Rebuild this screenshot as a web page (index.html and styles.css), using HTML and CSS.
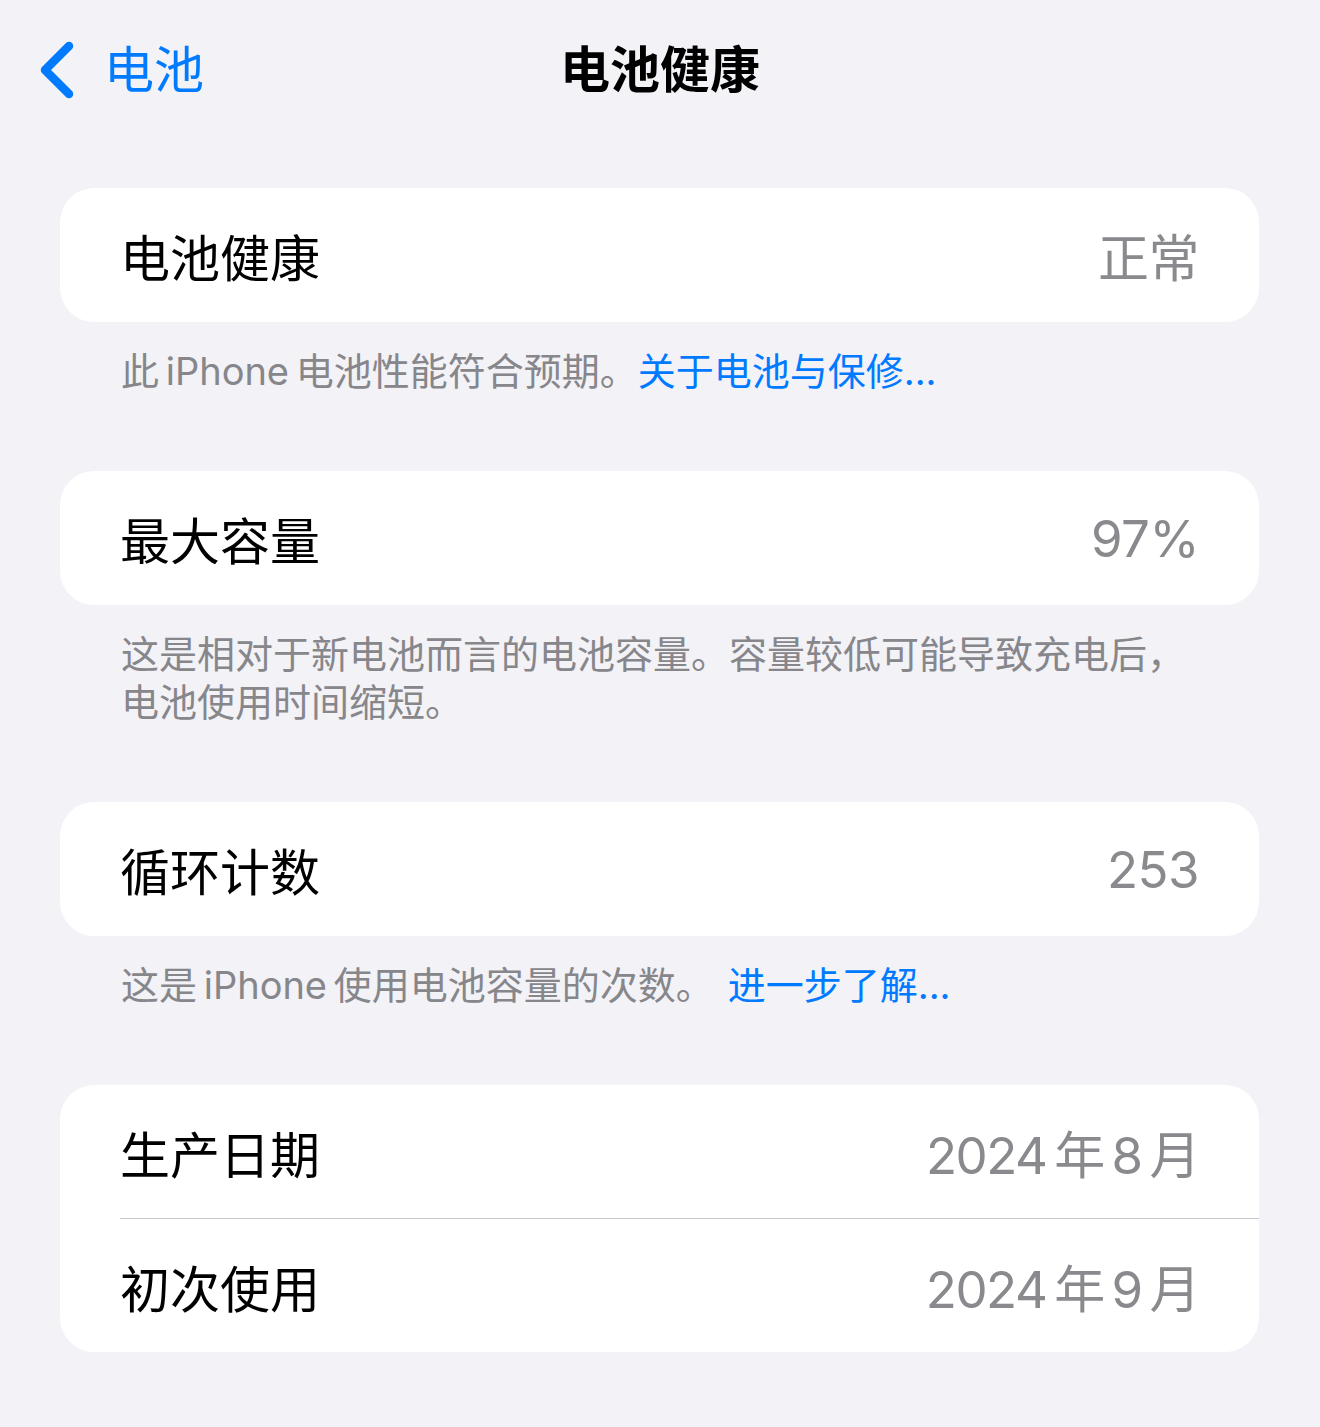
FILE: index.html
```html
<!DOCTYPE html>
<html lang="zh-CN">
<head>
    <meta charset="UTF-8">
    <meta name="viewport" content="width=device-width, initial-scale=1.0">
    <title>电池健康</title>
    <link rel="stylesheet" href="styles.css">
</head>
<body>
    <header class="nav">
        <a class="back" href="#">
            <svg class="chevron" width="40" height="62" viewBox="0 0 40 62">
                <path d="M30 7 L6 31 L30 55" fill="none" stroke="currentColor" stroke-width="8.5" stroke-linecap="round" stroke-linejoin="round"/>
            </svg>
            <span>电池</span>
        </a>
        <h1 class="title">电池健康</h1>
    </header>

    <main class="content">
        <section class="group">
            <div class="row">
                <span class="label">电池健康</span>
                <span class="value">正常</span>
            </div>
        </section>
        <p class="footer">此 iPhone 电池性能符合预期。<a href="#">关于电池与保修...</a></p>

        <section class="group">
            <div class="row">
                <span class="label">最大容量</span>
                <span class="value">97%</span>
            </div>
        </section>
        <p class="footer">这是相对于新电池而言的电池容量。容量较低可能导致充电后，电池使用时间缩短。</p>

        <section class="group">
            <div class="row">
                <span class="label">循环计数</span>
                <span class="value">253</span>
            </div>
        </section>
        <p class="footer">这是 iPhone 使用电池容量的次数。<a class="more" href="#">进一步了解...</a></p>

        <section class="group">
            <div class="row">
                <span class="label">生产日期</span>
                <span class="value date">2024 年 8 月</span>
            </div>
            <div class="row">
                <span class="label">初次使用</span>
                <span class="value date">2024 年 9 月</span>
            </div>
        </section>
    </main>
</body>
</html>
```

FILE: styles.css
```css
:root {
    --bg-color: #f2f2f7;
    --card-bg-color: #ffffff;
    --text-color: #000000;
    --secondary-color: #8a8a8e;
    --footer-color: #86868b;
    --link-color: #007aff;
    --separator-color: #c8c8cc;
}

body {
    margin: 0;
    background: var(--bg-color);
    color: var(--text-color);
    font-family: Inter, "Noto Sans CJK SC", sans-serif;
}

.nav {
    position: relative;
    height: 140px;
    display: flex;
    align-items: center;
    justify-content: center;
}

.back {
    position: absolute;
    left: 39px;
    top: 39px;
    display: flex;
    align-items: center;
    gap: 25px;
    color: var(--link-color);
    text-decoration: none;
    font-size: 50px;
    line-height: 62px;
}

.chevron {
    display: block;
}

.title {
    margin: 0;
    font-size: 50px;
    font-weight: 600;
    line-height: 62px;
}

.content {
    padding: 48px 61px 40px 60px;
}

.group {
    background: var(--card-bg-color);
    border-radius: 34px;
    overflow: hidden;
}

.row {
    display: flex;
    justify-content: space-between;
    align-items: center;
    height: 133px;
    margin-left: 60px;
    padding-right: 60px;
    font-size: 50px;
}

.group > .row:only-child {
    height: 134px;
}

.row + .row {
    border-top: 1px solid var(--separator-color);
}

.value {
    color: var(--secondary-color);
    font-size: 51px;
    letter-spacing: -0.5px;
}

.date {
    letter-spacing: -1.5px;
    word-spacing: -5px;
}

.footer {
    margin: 0 0 76px;
    padding: 25px 60px 0 61px;
    font-size: 38px;
    line-height: 48px;
    color: var(--footer-color);
    word-spacing: -4px;
}

.footer a {
    color: var(--link-color);
    text-decoration: none;
}

.footer .more {
    margin-left: 14px;
}
```
